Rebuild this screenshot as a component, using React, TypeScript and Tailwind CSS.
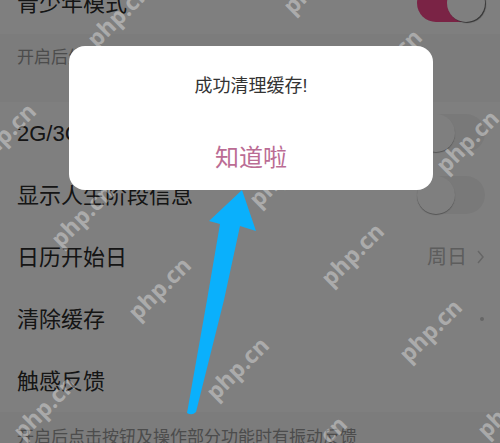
import { useState } from 'react'
import type { ReactNode } from 'react'

const marks = [
    { x: 118, y: 15 }, { x: 314, y: -18 }, { x: 390, y: 60 }, { x: 4, y: 134 },
    { x: 467, y: 141 }, { x: 280, y: 175 }, { x: 82, y: 215 }, { x: 352, y: 254 },
    { x: 159, y: 288 }, { x: 430, y: 330 }, { x: 237, y: 368 }, { x: 44, y: 407 },
    { x: 508, y: 406 }, { x: 315, y: 447 },
]

type RowProps = {
    label: string;
    htmlFor?: string;
    children?: ReactNode;
}

const Row = ({ label, htmlFor, children }: RowProps) => (
    <div className="flex h-[62px] items-center justify-between bg-white pl-[17px] pr-[15px]">
        <label htmlFor={htmlFor} className="pt-0.5 text-[22px] leading-8 text-[#2a2a2a]">{label}</label>
        {children}
    </div>
)

const Toggle = ({ id, on = false }: { id: string; on?: boolean }) => {
    const [checked, setChecked] = useState(on)

    return (
        <span className="relative h-[38px] w-[68px]">
            <input
                type="checkbox" id={id} role="switch" checked={checked}
                onChange={() => setChecked(!checked)}
                className="peer block h-full w-full appearance-none rounded-full bg-[#f3f3f3] checked:bg-[#f5468a]" />
            <span className="pointer-events-none absolute left-0 top-0 size-[38px] rounded-full bg-white shadow-[0_1px_1px_#aaa] peer-checked:left-[30px] peer-checked:shadow-[1px_1px_1px_#666]"></span>
        </span>
    )
}

const App = () => {
    const [open, setOpen] = useState(true)

    return (
        <div className="relative min-h-screen overflow-hidden bg-[#f8f8f8] font-['Liberation_Sans','Noto_Sans_CJK_SC',sans-serif]">
            <main className="-mt-7 h-[471px]">
                <Row label="青少年模式" htmlFor="teen">
                    <Toggle id="teen" on />
                </Row>
                <p className="h-[68px] px-[17px] pt-3 text-[17px] leading-6 text-[#999]">开启后生效</p>
                <Row label="2G/3G/4G" htmlFor="network">
                    <Toggle id="network" />
                </Row>
                <Row label="显示人生阶段信息" htmlFor="stage">
                    <Toggle id="stage" />
                </Row>
                <Row label="日历开始日">
                    <button type="button" className="flex items-center gap-2.5 text-xl text-[#bbb]">
                        周日
                        <svg viewBox="0 0 8 16" className="h-4 w-2" fill="none" stroke="#ccc" strokeWidth="1.5">
                            <path d="M1 2l5 6-5 6" />
                        </svg>
                    </button>
                </Row>
                <Row label="清除缓存">
                    <span className="mr-px size-1 rounded-full bg-[#ccc]"></span>
                </Row>
                <Row label="触感反馈" />
                <p className="px-[17px] pt-3.5 text-[17px] leading-6 text-[#999]">开启后点击按钮及操作部分功能时有振动反馈</p>
            </main>

            {open && (
                <div className="absolute inset-0 bg-black/50 pl-[69px] pr-[67px] pt-[46px]">
                    <div role="dialog" className="flex h-36 flex-col items-center rounded-2xl bg-white pt-7">
                        <p className="text-lg leading-6 text-[#333]">成功清理缓存!</p>
                        <button type="button" onClick={() => setOpen(false)} className="mt-11 text-2xl text-[#bb6c94]">知道啦</button>
                    </div>
                </div>
            )}

            <svg className="pointer-events-none absolute left-[180px] top-[180px]" width="90" height="240" fill="#0ab0fc">
                <path d="M62 10L76 51L60 46L44 120L16 232Q12 236 7 233L27 120L40 44L29 41Z" />
            </svg>

            <div className="pointer-events-none absolute inset-0" aria-hidden="true">
                {marks.map(({ x, y }) => (
                    <span
                        key={`${x}-${y}`}
                        className="absolute -translate-x-1/2 -translate-y-1/2 -rotate-45 font-['Open_Sans',sans-serif] text-[23px] font-bold text-white/35"
                        style={{ left: x, top: y }}>
                        php.cn
                    </span>
                ))}
            </div>
        </div>
    )
}

export default App
